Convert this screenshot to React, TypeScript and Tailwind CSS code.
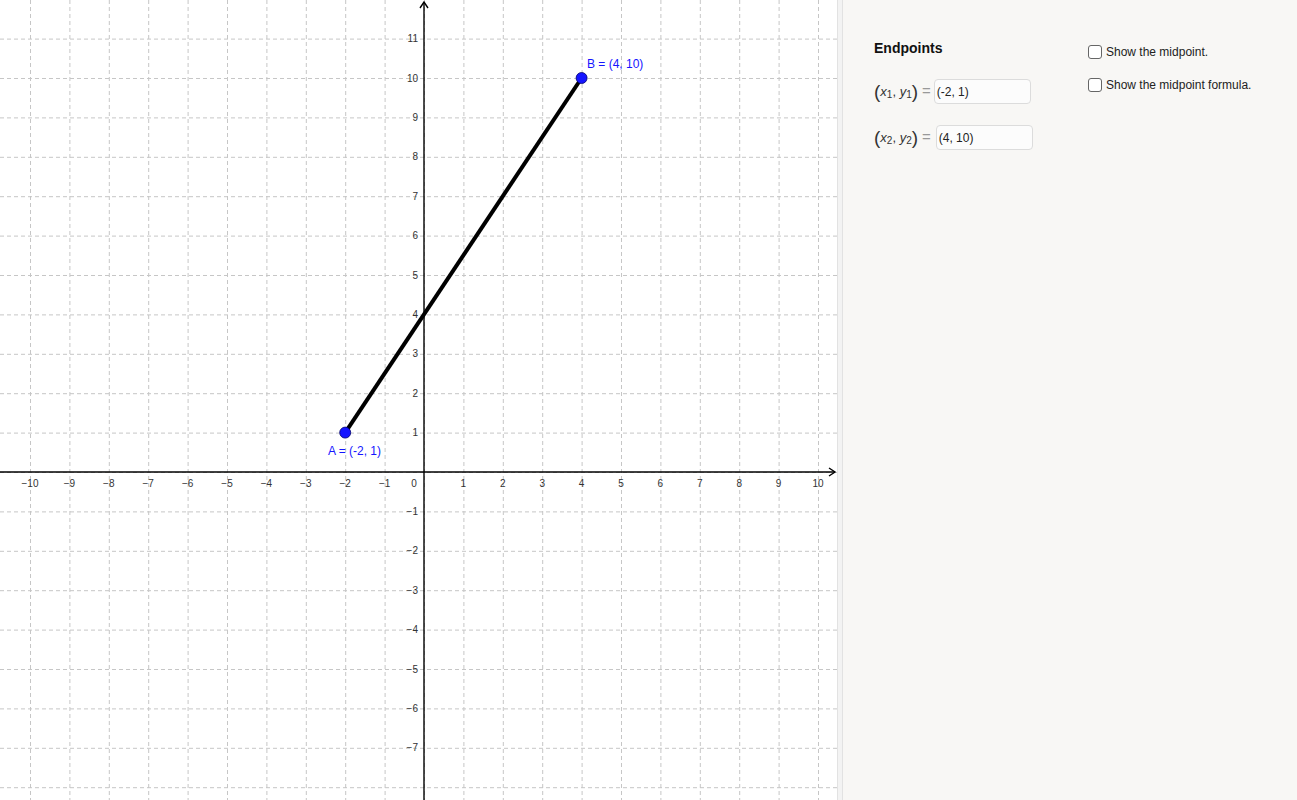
import React from "react";

const UNIT = 39.4;
const OX = 424;
const OY = 472;
const W = 837;
const H = 800;

const px = (x: number) => OX + x * UNIT;
const py = (y: number) => OY - y * UNIT;

const xs = Array.from({ length: 21 }, (_, i) => i - 10);
const ys = Array.from({ length: 20 }, (_, i) => i - 8);

const fmt = (n: number) => (n < 0 ? `\u2212${-n}` : `${n}`);

function Graph() {
  return (
    <svg width={W} height={H} className="block">
      {/* grid */}
      <g stroke="#c6c6c6" strokeWidth={1} strokeDasharray="4 3">
        {xs.map((x) => (
          <line key={`gx${x}`} x1={px(x) + 0.5} y1={0} x2={px(x) + 0.5} y2={H} />
        ))}
        {ys.map((y) => (
          <line key={`gy${y}`} x1={0} y1={py(y) + 0.5} x2={W} y2={py(y) + 0.5} />
        ))}
      </g>

      {/* axes */}
      <g stroke="#000" strokeWidth={1.4} fill="none">
        <line x1={0} y1={OY} x2={W - 2} y2={OY} />
        <line x1={OX} y1={2} x2={OX} y2={H} />
        <path d={`M ${W - 8} ${OY - 4} L ${W - 2} ${OY} L ${W - 8} ${OY + 4}`} />
        <path d={`M ${OX - 4} 8 L ${OX} 2 L ${OX + 4} 8`} />
      </g>

      {/* tick labels */}
      <g fill="#333" fontSize={10} fontFamily="'Liberation Sans', Arial, sans-serif">
        {xs.map((x) =>
          x === 0 ? null : (
            <text key={`lx${x}`} x={px(x)} y={OY + 15} textAnchor="middle">
              {fmt(x)}
            </text>
          )
        )}
        <text x={OX - 10} y={OY + 15} textAnchor="middle">
          0
        </text>
        {ys.map((y) =>
          y === 0 || y > 11 || y < -7 ? null : (
            <text key={`ly${y}`} x={OX - 6} y={py(y) + 3.5} textAnchor="end">
              {fmt(y)}
            </text>
          )
        )}
      </g>

      {/* segment */}
      <line x1={px(-2)} y1={py(1)} x2={px(4)} y2={py(10)} stroke="#000" strokeWidth={4} />
      <circle cx={px(-2)} cy={py(1)} r={5.5} fill="#1515ff" stroke="#00006e" strokeWidth={0.8} />
      <circle cx={px(4)} cy={py(10)} r={5.5} fill="#1515ff" stroke="#00006e" strokeWidth={0.8} />

      <g fill="#1515ff" fontSize={12} fontFamily="'Liberation Sans', Arial, sans-serif">
        <text x={328} y={455}>
          A = (-2, 1)
        </text>
        <text x={587} y={68}>
          B = (4, 10)
        </text>
      </g>
    </svg>
  );
}

function Pair({ n, value, shift }: { n: string; value: string; shift: string }) {
  return (
    <div className="flex items-center">
      <div className="flex items-center text-[#333] font-['Liberation_Sans',Arial,sans-serif]">
        <span className="text-[19px] leading-none font-light">(</span>
        <span className="text-[13px] italic">x</span>
        <span className="text-[10px] mt-[6px]">{n}</span>
        <span className="text-[13px]">,&nbsp;</span>
        <span className="text-[13px] italic">y</span>
        <span className="text-[10px] mt-[6px]">{n}</span>
        <span className="text-[19px] leading-none font-light">)</span>
        <span className="text-[15px] text-[#999] ml-[4px]">=</span>
      </div>
      <div
        className={`${shift} w-[97px] h-[25px] rounded-[4px] border border-[#dcdcdc] bg-[#fcfcfc] flex items-center pl-[2px] text-[12px] text-[#222] font-['Liberation_Sans',Arial,sans-serif]`}
      >
        {value}
      </div>
    </div>
  );
}

function Check({ label }: { label: string }) {
  return (
    <div className="flex items-center gap-[4px] text-[12px] leading-[14px] text-[#222] font-['Liberation_Sans',Arial,sans-serif]">
      <div className="w-[14px] h-[14px] rounded-[3px] border-[1.5px] border-[#666] bg-white" />
      <span>{label}</span>
    </div>
  );
}

export default function App() {
  return (
    <div className="w-[1297px] h-[800px] flex overflow-hidden bg-white">
      <div className="w-[837px] h-[800px] shrink-0">
        <Graph />
      </div>
      <div className="w-[6px] h-[800px] shrink-0 bg-[#f3f3f3] border-x border-[#e2e2e2]" />
      <div className="flex-1 h-[800px] bg-[#f8f7f5] flex">
        <div className="w-[245px] pl-[31px] pt-[39px] flex flex-col">
          <div className="text-[14px] font-bold text-[#111] font-['Liberation_Sans',Arial,sans-serif] leading-[18px]">
            Endpoints
          </div>
          <div className="mt-[22px]">
            <Pair n="1" value="(-2, 1)" shift="ml-[3px]" />
          </div>
          <div className="mt-[21px]">
            <Pair n="2" value="(4, 10)" shift="ml-[5px]" />
          </div>
        </div>
        <div className="pt-[45px] flex flex-col gap-[19px]">
          <Check label="Show the midpoint." />
          <Check label="Show the midpoint formula." />
        </div>
      </div>
    </div>
  );
}
